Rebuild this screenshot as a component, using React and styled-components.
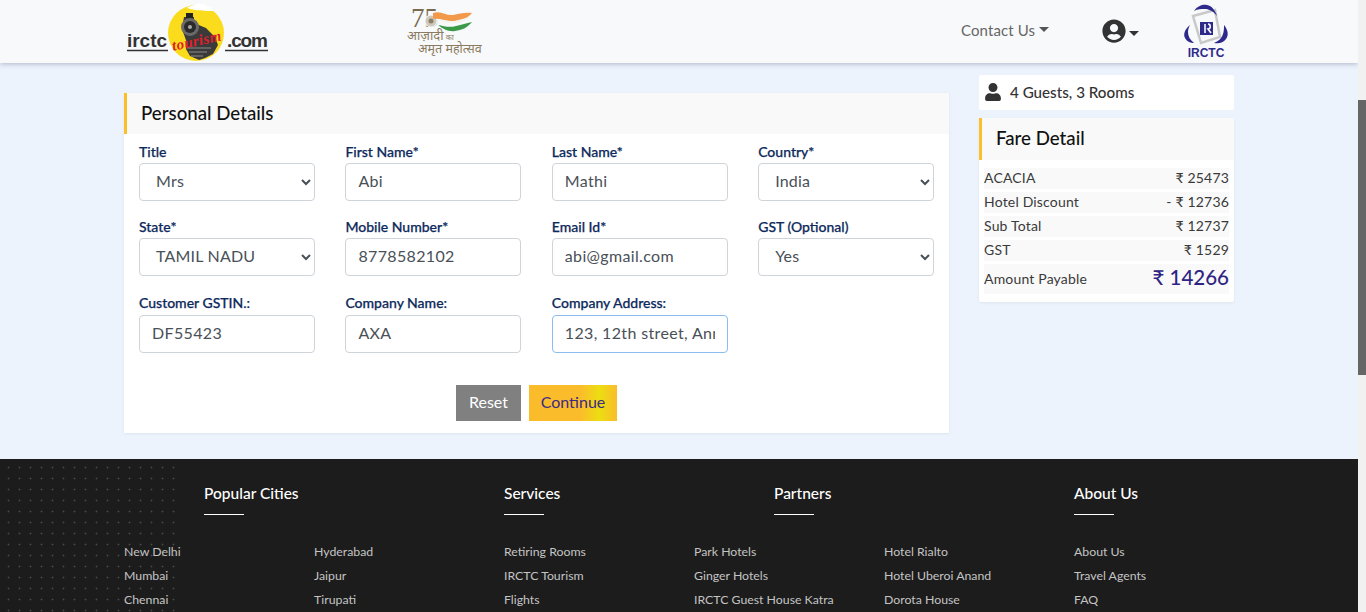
import styled, { createGlobalStyle } from 'styled-components'
import { FaUser, FaUserCircle } from 'react-icons/fa'

const GlobalStyle = createGlobalStyle`
  html, body {
    margin: 0;
    height: 612px;
    overflow: hidden;
    background: #edf3fd;
    font-family: "Lato", "Noto Sans", "Liberation Sans", sans-serif;
  }
  * { box-sizing: border-box; }
`

const Page = styled.div`
  width: 1358px;
`

const ScrollRail = styled.div`
  position: fixed;
  top: 0;
  right: 0;
  bottom: 0;
  width: 8px;
  background: #f1f1f1;

  &::after {
    content: '';
    position: absolute;
    top: 100px;
    left: 0;
    width: 100%;
    height: 275px;
    background: #666;
  }
`

const Header = styled.header`
  height: 63px;
  display: flex;
  align-items: center;
  background: #f8f9fb;
  box-shadow: 0 1px 5px rgba(60, 70, 100, 0.35);
  position: relative;
`

const SiteLogo = styled.svg`
  width: 146px;
  height: 62px;
  margin-left: 125px;
  flex: none;
`

const Emblem = styled.svg`
  width: 80px;
  height: 56px;
  margin-left: 133px;
  flex: none;
`

const ContactLink = styled.a`
  margin: 0 0 4px 477px;
  font-size: 15px;
  color: #666;
  display: flex;
  align-items: center;
  width: 141px;
  letter-spacing: 0.1px;
`

const Caret = styled.span`
  display: inline-block;
  margin: ${p => p.$drop || 0}px 0 0 ${p => p.$gap || 4}px;
  border-top: 5px solid ${p => p.$color || '#444'};
  border-left: 5px solid transparent;
  border-right: 5px solid transparent;
`

const UserMenu = styled.div`
  width: 81px;
  margin-bottom: 2px;
  display: flex;
  align-items: center;
  color: #333;
  font-size: 24px;
`

const BrandLogo = styled.svg`
  width: 46px;
  height: 60px;
  margin-bottom: 2px;
  flex: none;
`

const Main = styled.main`
  height: 396px;
  padding: 12px 0 0 124px;
  display: flex;
  align-items: flex-start;
  gap: 30px;
`

const DetailsCard = styled.section`
  width: 825px;
  height: 340px;
  margin-top: 18px;
  background: #fff;
  box-shadow: 0 1px 3px rgba(0, 0, 0, 0.06);
`

const CardHeading = styled.h2`
  margin: 0;
  height: ${p => p.$height || 41}px;
  display: flex;
  align-items: center;
  padding: 0 0 ${p => p.$lift || 2}px 14px;
  background: #f9f9f9;
  border-left: 3px solid #fbbf2c;
  font-size: 18.7px;
  font-weight: 500;
  color: #111;
`

const FormGrid = styled.form`
  display: grid;
  grid-template-columns: repeat(4, 176px);
  column-gap: 30.4px;
  padding: 8px 0 0 15px;
`

const Field = styled.label`
  display: block;
  height: ${p => p.$height || 75}px;
  font-size: 14px;
  font-weight: 500;
  line-height: 20px;
  color: #0d2a5c;
  -webkit-text-stroke: 0.25px #0d2a5c;
  ${p => p.$lastRow && `
    margin-top: -1px;
    input { margin-top: 2px; }
  `}
`

const controlStyles = `
  display: block;
  width: 100%;
  height: 38px;
  margin-top: 1px;
  border: 1px solid #ced4da;
  border-radius: 4px;
  background: #fff;
  color: #495057;
  font-family: inherit;
  font-size: 16px;
  -webkit-text-stroke: 0;
  outline: none;
`

const TextInput = styled.input`
  ${controlStyles}
  letter-spacing: 0.35px;
  padding: 0 12px 4px;
  ${p => p.$focused && 'border-color: #8dbcf0;'}
`

const SelectInput = styled.select`
  ${controlStyles}
  letter-spacing: 0.2px;
  padding: 0 12px 4px;
`

const ButtonRow = styled.div`
  display: flex;
  justify-content: center;
  gap: 8px;
  margin-top: 17px;
`

const ActionButton = styled.button`
  height: 36px;
  width: ${p => p.$width}px;
  border: 0;
  padding: 0 0 4px;
  font-family: inherit;
  font-size: 16px;
  color: ${p => p.$primary ? '#3d2a85' : '#fff'};
  background: ${p => p.$primary
    ? 'linear-gradient(90deg, #fbbc2c 58%, #ecde10 80%, #fbbc2c 100%)'
    : '#808080'};
`

const SideColumn = styled.aside`
  width: 255px;
  display: flex;
  flex-direction: column;
  gap: 8px;
`

const GuestBox = styled.div`
  height: 35px;
  display: flex;
  align-items: center;
  gap: 8px;
  padding: 0 0 1px 5px;
  background: #fff;
  border-radius: 2px;
  font-size: 15.2px;
  font-weight: 500;
  color: #333;

  svg { font-size: 18px; }
`

const FareCard = styled.section`
  background: #fff;
  border-radius: 2px;
  box-shadow: 0 1px 3px rgba(0, 0, 0, 0.06);
`

const FareRows = styled.div`
  display: flex;
  flex-direction: column;
  gap: 3px;
  padding: 8px 5px;
`

const FareRow = styled.div`
  height: ${p => p.$total ? 30 : 21}px;
  display: flex;
  align-items: center;
  justify-content: space-between;
  padding-bottom: ${p => p.$total ? 1 : 3}px;
  background: #f9f9f9;
  font-size: 14px;
  letter-spacing: 0.18px;
  color: #3a3a3a;
`

const TotalAmount = styled.span`
  font-size: 20.5px;
  font-weight: 500;
  margin-bottom: 3px;
  letter-spacing: 0;
  color: #2f2483;
`

const Footer = styled.footer`
  position: relative;
  height: 153px;
  overflow: hidden;
  background: #1c1c1c;
  margin-right: -8px;
  padding-left: 124px;
  display: grid;
  grid-template-columns: 380px 190px 380px 190px;
  align-content: start;

  &::before {
    content: '';
    position: absolute;
    top: 3px;
    left: 3px;
    width: 176px;
    bottom: 0;
    background-image: radial-gradient(circle, #4a4a4a 0.8px, transparent 1.1px);
    background-size: 11px 11px;
  }
`

const FooterGroup = styled.div`
  position: relative;
`

const FooterHeading = styled.h4`
  margin: 24px 0 0 ${p => p.$indent || 0}px;
  font-size: 15.5px;
  font-weight: 500;
  line-height: 20px;
  color: #fff;

  &::after {
    content: '';
    display: block;
    width: 40px;
    height: 1px;
    margin-top: 11px;
    background: #fff;
  }
`

const LinkColumns = styled.div`
  display: grid;
  grid-template-columns: repeat(${p => p.$cols}, 190px);
  grid-auto-flow: column;
  grid-template-rows: repeat(3, 24px);
  margin-top: 25px;
`

const FooterLink = styled.a`
  font-size: 12.3px;
  line-height: 24px;
  color: #c4c4c4;
  white-space: nowrap;
`

const footerGroups = [
  { title: 'Popular Cities', indent: 80, cols: 2, links: ['New Delhi', 'Mumbai', 'Chennai', 'Hyderabad', 'Jaipur', 'Tirupati'] },
  { title: 'Services', cols: 1, links: ['Retiring Rooms', 'IRCTC Tourism', 'Flights'] },
  { title: 'Partners', indent: 80, cols: 2, links: ['Park Hotels', 'Ginger Hotels', 'IRCTC Guest House Katra', 'Hotel Rialto', 'Hotel Uberoi Anand', 'Dorota House'] },
  { title: 'About Us', cols: 1, links: ['About Us', 'Travel Agents', 'FAQ'] },
]

const fareRows = [
  ['ACACIA', '₹ 25473'],
  ['Hotel Discount', '- ₹ 12736'],
  ['Sub Total', '₹ 12737'],
  ['GST', '₹ 1529'],
]

function TourismLogo() {
  return (
    <SiteLogo viewBox="0 0 146 62">
      <circle cx="71" cy="32" r="28" fill="#fbdc1c" />
      <path d="M62 7c3-3 7-2 10-4 4-1 8 0 11 3 3 0 5 2 6 4-8 0-18 0-27-3z" fill="#fff" />
      <path d="M59 16h10v6l12 5 9 9 3 8-5 9-8 4-6 2-9-4-4-7 1-6-5-14z" fill="#3a3a3a" />
      <path d="M61 12h7v5h-7z" fill="#222" />
      <circle cx="65" cy="26" r="9" fill="#6a6a6a" />
      <circle cx="65" cy="26" r="6" fill="#2a2a2a" />
      <circle cx="65" cy="26" r="2" fill="#aaa" />
      <path d="M62 47h24M64 51h18M66 55h12" stroke="#8a8a8a" strokeWidth="1.2" />
      <text x="46" y="45" textLength="50" fontFamily="Liberation Serif, serif" fontStyle="italic" fontWeight="700" fontSize="15" fill="#e0202a" transform="rotate(-12 70 38)">tourism</text>
      <text x="2" y="46" textLength="40" fontFamily="Liberation Sans, sans-serif" fontWeight="700" fontSize="19" fill="#333">irctc</text>
      <text x="102" y="46" textLength="41" fontFamily="Liberation Sans, sans-serif" fontWeight="700" fontSize="19" fill="#333">.com</text>
      <path d="M2 49.5h41M100 49.5h43" stroke="#333" strokeWidth="1.5" />
    </SiteLogo>
  )
}

function AmritEmblem() {
  return (
    <Emblem viewBox="0 0 80 56">
      <text x="7" y="23" fontFamily="Liberation Serif, serif" fontSize="27" fill="#7a6a50">75</text>
      <circle cx="27" cy="17" r="6.5" fill="#f8f9fb" />
      <circle cx="27" cy="17" r="5.5" fill="#cfc8ba" />
      <circle cx="27" cy="17" r="2.5" fill="#8a7f6a" />
      <path d="M29 9c8-3 13 3 20 2 6-1 12-3 19-2-4 5-10 7-16 8-8 1-16-3-23-2z" fill="#f2994a" />
      <path d="M33 16c6-1 11 2 17 1 6-1 11-3 16-4-3 3-7 5-13 6-7 1-12-1-20-3z" fill="#f4f4ee" />
      <path d="M34 21c6 1 11 3 18 1 6-1 10-3 16-4-5 6-10 8-17 9-6 1-12-2-17-6z" fill="#3a9a48" />
      <text x="3" y="36" fontFamily="Noto Sans, DejaVu Sans, sans-serif" fontSize="13" fill="#8a7a60">आज़ादी<tspan fontSize="8"> का</tspan></text>
      <text x="14" y="49" fontFamily="Noto Sans, DejaVu Sans, sans-serif" fontSize="12.5" fill="#8a7a60">अमृत महोत्सव</text>
    </Emblem>
  )
}

function IrctcMark() {
  return (
    <BrandLogo viewBox="0 0 46 60">
      <path d="M10 15l22-6 5 27-19 6z" fill="none" stroke="#c9c9c9" strokeWidth="2.5" />
      <path d="M11 10C15 4 21 3 24 4c5 1 8 5 10 11-4-5-8-7-12-7-4 0-7 0-11 2z" fill="#2e2a8c" />
      <path d="M7 24C2 28 0 33 2 37c2 4 6 5 9 5-4-3-6-7-6-11 0-3 1-5 2-7z" fill="#2e2a8c" />
      <path d="M41 24c4 5 5 10 2 14-3 4-7 5-12 4 5-2 8-5 9-9 1-3 1-6 1-9z" fill="#2e2a8c" />
      <path d="M17 21h13v13H17z" fill="#2e2a8c" />
      <path d="M22 23v9M25 23c3 0 3 5 0 5l3 4" fill="none" stroke="#f8f9fb" strokeWidth="1.6" />
      <text x="23" y="56" textAnchor="middle" fontFamily="Liberation Sans, sans-serif" fontWeight="700" fontSize="12" fill="#2e2a8c">IRCTC</text>
    </BrandLogo>
  )
}

function App() {
  return (
    <Page>
      <GlobalStyle />
      <Header>
        <TourismLogo />
        <AmritEmblem />
        <ContactLink>Contact Us<Caret $color="#555" /></ContactLink>
        <UserMenu><FaUserCircle /><Caret $color="#333" $gap={3} $drop={6} /></UserMenu>
        <IrctcMark />
      </Header>

      <Main>
        <DetailsCard>
          <CardHeading>Personal Details</CardHeading>
          <FormGrid>
            <Field>Title
              <SelectInput defaultValue="Mrs"><option>Mr</option><option>Mrs</option><option>Ms</option></SelectInput>
            </Field>
            <Field>First Name*<TextInput defaultValue="Abi" /></Field>
            <Field>Last Name*<TextInput defaultValue="Mathi" /></Field>
            <Field>Country*
              <SelectInput defaultValue="India"><option>India</option></SelectInput>
            </Field>
            <Field $height={77}>State*
              <SelectInput defaultValue="TAMIL NADU"><option>TAMIL NADU</option><option>KERALA</option></SelectInput>
            </Field>
            <Field $height={77}>Mobile Number*<TextInput defaultValue="8778582102" /></Field>
            <Field $height={77}>Email Id*<TextInput defaultValue="abi@gmail.com" /></Field>
            <Field $height={77}>GST (Optional)
              <SelectInput defaultValue="Yes"><option>Yes</option><option>No</option></SelectInput>
            </Field>
            <Field $lastRow>Customer GSTIN.:<TextInput defaultValue="DF55423" /></Field>
            <Field $lastRow>Company Name:<TextInput defaultValue="AXA" /></Field>
            <Field $lastRow>Company Address:<TextInput $focused defaultValue="123, 12th street, Anna Nagar" /></Field>
          </FormGrid>
          <ButtonRow>
            <ActionButton type="button" $width={65}>Reset</ActionButton>
            <ActionButton type="button" $width={88} $primary>Continue</ActionButton>
          </ButtonRow>
        </DetailsCard>

        <SideColumn>
          <GuestBox><FaUser />4 Guests, 3 Rooms</GuestBox>
          <FareCard>
            <CardHeading $height={42} $lift={3}>Fare Detail</CardHeading>
            <FareRows>
              {fareRows.map(([label, value]) => (
                <FareRow key={label}><span>{label}</span><span>{value}</span></FareRow>
              ))}
              <FareRow $total><span>Amount Payable</span><TotalAmount>₹ 14266</TotalAmount></FareRow>
            </FareRows>
          </FareCard>
        </SideColumn>
      </Main>

      <Footer>
        {footerGroups.map(group => (
          <FooterGroup key={group.title}>
            <FooterHeading $indent={group.indent}>{group.title}</FooterHeading>
            <LinkColumns $cols={group.cols}>
              {group.links.map(link => <FooterLink key={link}>{link}</FooterLink>)}
            </LinkColumns>
          </FooterGroup>
        ))}
      </Footer>
      <ScrollRail />
    </Page>
  )
}

export default App
